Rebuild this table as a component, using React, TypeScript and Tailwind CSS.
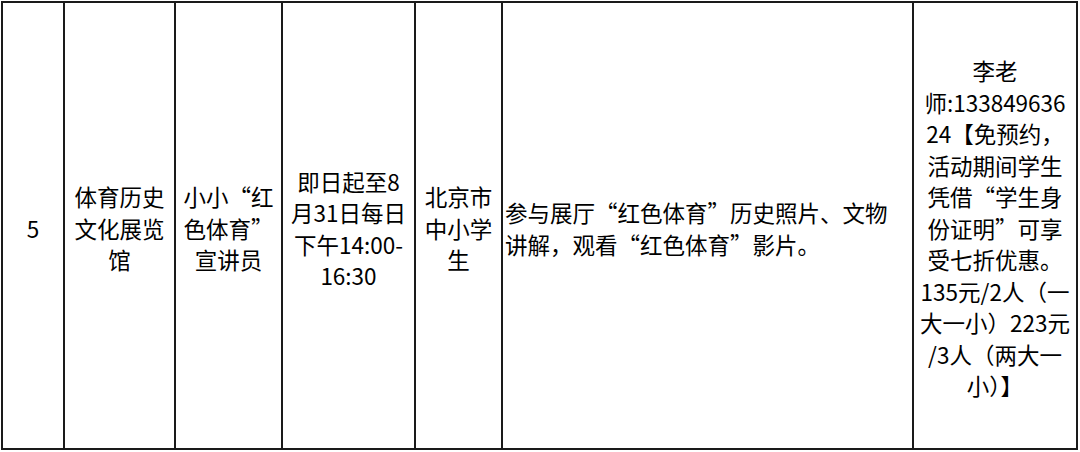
const cells: { w: string; lines: string[]; align?: "left" }[] = [
  { w: "w-[62px]", lines: ["5"] },
  { w: "w-[111px]", lines: ["体育历史", "文化展览", "馆"] },
  { w: "w-[107px]", lines: ["小小“红", "色体育”", "宣讲员"] },
  { w: "w-[133px]", lines: ["即日起至8", "月31日每日", "下午14:00-", "16:30"] },
  { w: "w-[87px]", lines: ["北京市", "中小学", "生"] },
  {
    w: "w-[411px]",
    lines: ["参与展厅“红色体育”历史照片、文物", "讲解，观看“红色体育”影片。"],
    align: "left",
  },
];

const contact = [
  "李老",
  "师:133849636",
  "24【免预约，",
  "活动期间学生",
  "凭借“学生身",
  "份证明”可享",
  "受七折优惠。",
  "135元/2人（一",
  "大一小）223元",
  "/3人（两大一",
  "小）】",
];

// full-width comma sits centred in the reference, as in the TC forms
function Line({ text }: { text: string }) {
  const parts = text.split("，");
  return (
    <div className="whitespace-nowrap">
      {parts.map((p, i) => (
        <span key={i}>
          {p}
          {i < parts.length - 1 && (
            <span style={{ fontFamily: '"Noto Sans CJK TC", sans-serif' }}>，</span>
          )}
        </span>
      ))}
    </div>
  );
}

function Cell({ lines, align }: { lines: string[]; align?: "left" }) {
  return (
    <div className={align === "left" ? "text-left pl-[2px]" : "text-center"}>
      {lines.map((l, i) => (
        <Line key={i} text={l} />
      ))}
    </div>
  );
}

export default function App() {
  return (
    <div
      lang="zh-CN"
      className="w-[1080px] h-[452px] bg-white pt-px pl-px text-black text-[22.5px] leading-[31.5px]"
      style={{ fontFamily: '"Noto Sans CJK SC", "Noto Sans", sans-serif' }}
    >
      <div className="flex w-[1077px] h-[449px] border-2 border-[#1a1a1a]">
        {cells.map((c, i) => (
          <div
            key={i}
            className={`${c.w} shrink-0 h-full border-r-2 border-[#1a1a1a] flex items-center pt-[6px] ${
              c.align === "left" ? "justify-start" : "justify-center"
            }`}
          >
            <Cell lines={c.lines} align={c.align} />
          </div>
        ))}
        <div className="flex-1 h-full flex items-center justify-center pt-[6px]">
          <Cell lines={contact} />
        </div>
      </div>
    </div>
  );
}
